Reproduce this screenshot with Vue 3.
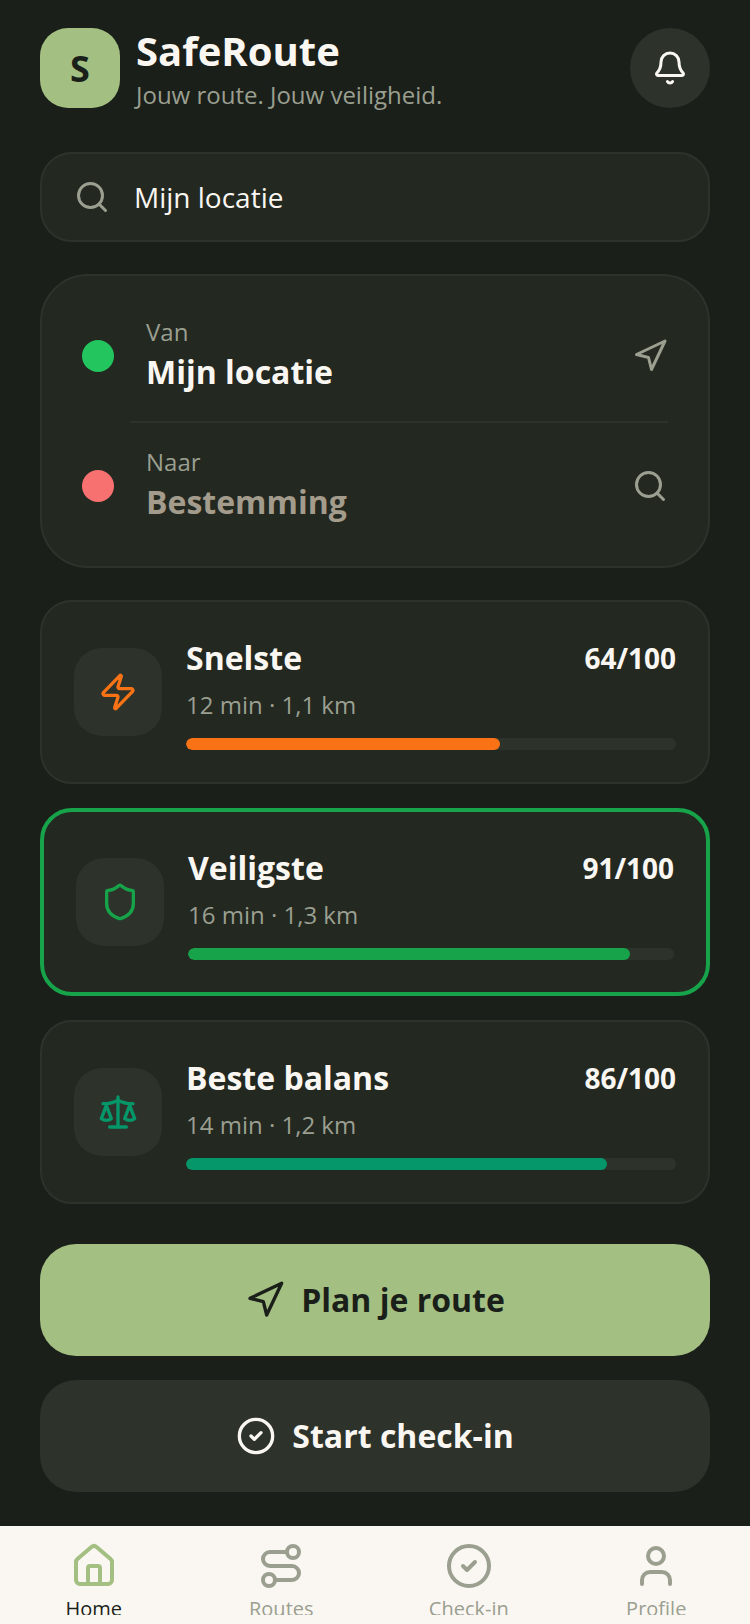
<script setup>
const routes = [
  { name: 'Snelste', meta: '12 min · 1,1 km', score: 64, color: '#f97316', icon: 'zap' },
  { name: 'Veiligste', meta: '16 min · 1,3 km', score: 91, color: '#16a34a', icon: 'shield', active: true },
  { name: 'Beste balans', meta: '14 min · 1,2 km', score: 86, color: '#059669', icon: 'scale' }
]

const tabs = [
  { label: 'Home', icon: 'home', active: true },
  { label: 'Routes', icon: 'route' },
  { label: 'Check-in', icon: 'check' },
  { label: 'Profile', icon: 'user' }
]
</script>

<template>
  <div class="screen">
    <main class="content">
      <header class="header">
        <div class="logo">S</div>
        <div class="brand">
          <h1>SafeRoute</h1>
          <p>Jouw route. Jouw veiligheid.</p>
        </div>
        <button class="bell">
          <svg width="36" height="36" viewBox="0 0 24 24" fill="none" stroke="#faf7f2" stroke-width="2" stroke-linecap="round" stroke-linejoin="round">
            <path d="M10.268 21a2 2 0 0 0 3.464 0" />
            <path d="M3.262 15.326A1 1 0 0 0 4 17h16a1 1 0 0 0 .74-1.673C19.41 13.956 18 12.499 18 8A6 6 0 0 0 6 8c0 4.499-1.411 5.956-2.738 7.326" />
          </svg>
        </button>
      </header>

      <div class="search">
        <svg width="36" height="36" viewBox="0 0 24 24" fill="none" stroke="#9a9f90" stroke-width="2" stroke-linecap="round" stroke-linejoin="round">
          <path d="m21 21-4.34-4.34" />
          <circle cx="11" cy="11" r="8" />
        </svg>
        <span>Mijn locatie</span>
      </div>

      <section class="planner">
        <div class="stop">
          <span class="dot from"></span>
          <div class="stop-text">
            <span class="stop-label">Van</span>
            <strong>Mijn locatie</strong>
          </div>
          <svg width="36" height="36" viewBox="0 0 24 24" fill="none" stroke="#9a9f90" stroke-width="2" stroke-linecap="round" stroke-linejoin="round">
            <polygon points="3 11 22 2 13 21 11 13 3 11" />
          </svg>
        </div>
        <div class="divider"></div>
        <div class="stop">
          <span class="dot to"></span>
          <div class="stop-text">
            <span class="stop-label">Naar</span>
            <strong class="placeholder">Bestemming</strong>
          </div>
          <svg width="36" height="36" viewBox="0 0 24 24" fill="none" stroke="#9a9f90" stroke-width="2" stroke-linecap="round" stroke-linejoin="round">
            <path d="m21 21-4.34-4.34" />
            <circle cx="11" cy="11" r="8" />
          </svg>
        </div>
      </section>

      <section class="options">
        <article v-for="r in routes" :key="r.name" class="option" :class="{ active: r.active }">
          <div class="option-icon">
            <svg width="40" height="40" viewBox="0 0 24 24" fill="none" :stroke="r.color" stroke-width="2" stroke-linecap="round" stroke-linejoin="round">
              <path v-if="r.icon === 'zap'" d="M4 14a1 1 0 0 1-.78-1.63l9.9-10.2a.5.5 0 0 1 .86.46l-1.92 6.02A1 1 0 0 0 13 10h7a1 1 0 0 1 .78 1.63l-9.9 10.2a.5.5 0 0 1-.86-.46l1.92-6.02A1 1 0 0 0 11 14z" />
              <path v-if="r.icon === 'shield'" d="M20 13c0 5-3.5 7.5-7.66 8.95a1 1 0 0 1-.67-.01C7.5 20.5 4 18 4 13V6a1 1 0 0 1 1-1c2 0 4.5-1.2 6.24-2.72a1.17 1.17 0 0 1 1.52 0C14.51 3.81 17 5 19 5a1 1 0 0 1 1 1z" />
              <template v-if="r.icon === 'scale'">
                <path d="m16 16 3-8 3 8c-.87.65-1.92 1-3 1s-2.13-.35-3-1Z" />
                <path d="m2 16 3-8 3 8c-.87.65-1.92 1-3 1s-2.13-.35-3-1Z" />
                <path d="M7 21h10" />
                <path d="M12 3v18" />
                <path d="M3 7h2c2 0 5-1 7-2 2 1 5 2 7 2h2" />
              </template>
            </svg>
          </div>
          <div class="option-body">
            <div class="option-head">
              <h2>{{ r.name }}</h2>
              <span class="score">{{ r.score }}/100</span>
            </div>
            <p class="meta">{{ r.meta }}</p>
            <div class="bar">
              <div class="fill" :style="{ width: r.score + '%', background: r.color }"></div>
            </div>
          </div>
        </article>
      </section>

      <button class="cta primary">
        <svg width="40" height="40" viewBox="0 0 24 24" fill="none" stroke="#1a1f1a" stroke-width="2" stroke-linecap="round" stroke-linejoin="round">
          <polygon points="3 11 22 2 13 21 11 13 3 11" />
        </svg>
        <span class="cta-label">Plan je route</span>
      </button>
      <button class="cta secondary">
        <svg width="40" height="40" viewBox="0 0 24 24" fill="none" stroke="#faf7f2" stroke-width="2" stroke-linecap="round" stroke-linejoin="round">
          <circle cx="12" cy="12" r="10" />
          <path d="m9 12 2 2 4-4" />
        </svg>
        <span class="cta-label">Start check-in</span>
      </button>
    </main>

    <nav class="tabbar">
      <div v-for="t in tabs" :key="t.label" class="tab" :class="{ active: t.active }">
        <svg width="48" height="48" viewBox="0 0 24 24" fill="none" stroke="currentColor" stroke-width="2" stroke-linecap="round" stroke-linejoin="round">
          <template v-if="t.icon === 'home'">
            <path d="M15 21v-8a1 1 0 0 0-1-1h-4a1 1 0 0 0-1 1v8" />
            <path d="M3 10a2 2 0 0 1 .709-1.528l7-5.999a2 2 0 0 1 2.582 0l7 5.999A2 2 0 0 1 21 10v9a2 2 0 0 1-2 2H5a2 2 0 0 1-2-2z" />
          </template>
          <template v-if="t.icon === 'route'">
            <circle cx="6" cy="19" r="3" />
            <path d="M9 19h8.5a3.5 3.5 0 0 0 0-7h-11a3.5 3.5 0 0 1 0-7H15" />
            <circle cx="18" cy="5" r="3" />
          </template>
          <template v-if="t.icon === 'check'">
            <circle cx="12" cy="12" r="10" />
            <path d="m9 12 2 2 4-4" />
          </template>
          <template v-if="t.icon === 'user'">
            <path d="M19 21v-2a4 4 0 0 0-4-4H9a4 4 0 0 0-4 4v2" />
            <circle cx="12" cy="7" r="4" />
          </template>
        </svg>
        <span>{{ t.label }}</span>
      </div>
    </nav>
  </div>
</template>

<style>
html,
body {
  margin: 0;
  background: #1a1f1a;
}
</style>

<style scoped>
* {
  box-sizing: border-box;
}

.screen {
  width: 750px;
  height: 1624px;
  display: flex;
  flex-direction: column;
  overflow: hidden;
  background: #1a1f1a;
  color: #faf7f2;
  font-family: "Open Sans", "Liberation Sans", sans-serif;
}

.content {
  flex: 1;
  padding: 28px 40px 0;
}

.header {
  display: flex;
  align-items: center;
  height: 80px;
}

.logo {
  width: 80px;
  height: 80px;
  flex: none;
  display: flex;
  align-items: center;
  justify-content: center;
  border-radius: 28px;
  background: #a3bf82;
  color: #1a1f1a;
  font-size: 36px;
  font-weight: 700;
}

.brand {
  flex: 1;
  margin-left: 16px;
  padding-top: 2px;
}

.brand h1 {
  margin: 0;
  font-size: 40px;
  line-height: 48px;
  font-weight: 700;
}

.brand p {
  margin: 4px 0 0;
  font-size: 24px;
  line-height: 32px;
  color: #9a9f90;
}

.bell {
  width: 80px;
  height: 80px;
  flex: none;
  display: flex;
  align-items: center;
  justify-content: center;
  padding: 0;
  border: none;
  border-radius: 50%;
  background: #2d332a;
}

.search {
  display: flex;
  align-items: center;
  gap: 24px;
  height: 90px;
  margin-top: 44px;
  padding: 0 32px;
  border: 2px solid #2d332a;
  border-radius: 32px;
  background: #232821;
  font-size: 28px;
}

.planner {
  margin-top: 32px;
  height: 294px;
  padding: 17px 40px 0;
  border: 2px solid #2d332a;
  border-radius: 48px;
  background: #232821;
}

.stop {
  display: flex;
  align-items: center;
  height: 126px;
}

.stop svg {
  flex: none;
}

.dot {
  width: 32px;
  height: 32px;
  flex: none;
  border-radius: 50%;
}

.dot.from {
  background: #22c55e;
}

.dot.to {
  background: #f87171;
}

.stop-text {
  flex: 1;
  display: flex;
  flex-direction: column;
  margin-left: 32px;
  padding-bottom: 4px;
}

.stop-label {
  font-size: 24px;
  line-height: 36px;
  color: #9a9f90;
}

.stop-text strong {
  font-size: 32px;
  line-height: 44px;
  font-weight: 700;
}

.placeholder {
  color: #a39b8b;
}

.divider {
  height: 2px;
  margin: 2px 0 0 48px;
  background: #2d332a;
}

.options {
  display: flex;
  flex-direction: column;
  gap: 24px;
  margin-top: 32px;
}

.option {
  display: flex;
  align-items: center;
  gap: 24px;
  padding: 32px;
  border: 2px solid #2d332a;
  border-radius: 32px;
  background: #232821;
}

.option.active {
  border: 4px solid #16a34a;
}

.option-icon {
  width: 88px;
  height: 88px;
  flex: none;
  display: flex;
  align-items: center;
  justify-content: center;
  border-radius: 28px;
  background: #2d332a;
}

.option-body {
  flex: 1;
}

.option-head {
  display: flex;
  align-items: center;
  justify-content: space-between;
}

.option-head h2 {
  margin: 0;
  font-size: 32px;
  line-height: 48px;
  font-weight: 700;
}

.score {
  font-size: 28px;
  font-weight: 700;
}

.meta {
  margin: 4px 0 0;
  font-size: 24px;
  line-height: 38px;
  color: #9a9f90;
}

.bar {
  height: 12px;
  margin-top: 14px;
  border-radius: 6px;
  background: #2d332a;
  overflow: hidden;
}

.fill {
  height: 100%;
  border-radius: 6px;
}

.cta {
  width: 100%;
  height: 112px;
  display: flex;
  align-items: center;
  justify-content: center;
  gap: 16px;
  border: none;
  border-radius: 36px;
  font-family: inherit;
  font-size: 32px;
  font-weight: 700;
}

.cta-label {
  padding-bottom: 2px;
}

.primary {
  margin-top: 40px;
  background: #a3bf82;
  color: #1a1f1a;
}

.secondary {
  margin-top: 24px;
  background: #2d332a;
  color: #faf7f2;
}

.tabbar {
  height: 98px;
  flex: none;
  display: grid;
  grid-template-columns: repeat(4, 1fr);
  padding-top: 16px;
  background: #faf7f2;
}

.tab {
  height: 73px;
  overflow: hidden;
  display: flex;
  flex-direction: column;
  align-items: center;
  color: #9a9f90;
  font-size: 20px;
  line-height: 30px;
}

.tab svg,
.tab span {
  flex: none;
}

.tab.active {
  color: #a3bf82;
}

.tab span {
  margin-top: 4px;
}

.tab.active span {
  color: #1a1f1a;
}
</style>
